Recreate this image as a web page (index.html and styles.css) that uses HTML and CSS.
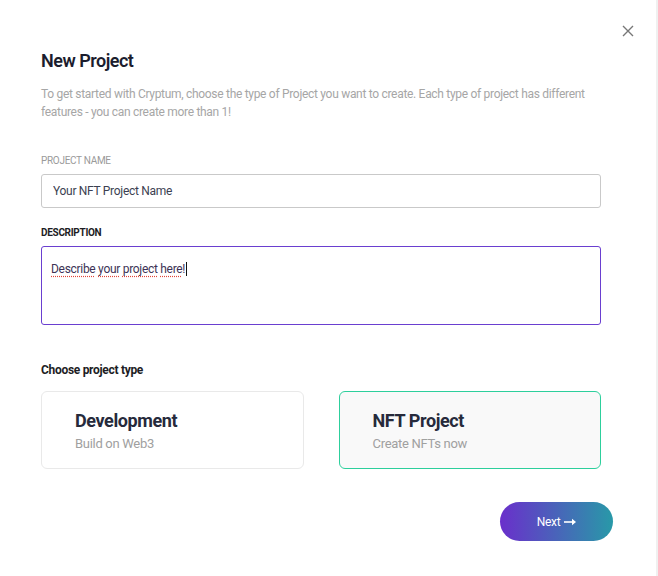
FILE: index.html
```html
<!DOCTYPE html>
<html>
<head>
    <title>New Project</title>
    <link rel="stylesheet" href="styles.css">
</head>
<body>
<div class="modal">
    <button class="close-btn" type="button" aria-label="Close">
        <svg width="12" height="12" viewBox="0 0 12 12">
            <path d="M1 1 L11 11 M11 1 L1 11" stroke="#777" stroke-width="1.4" fill="none"/>
        </svg>
    </button>

    <h2 class="modal-title">New Project</h2>
    <p class="modal-text">To get started with Cryptum, choose the type of Project you want to create. Each type of project has different features - you can create more than 1!</p>

    <div class="form-group">
        <label class="label" for="project-name">PROJECT NAME</label>
        <input class="input" type="text" id="project-name" value="Your NFT Project Name">
    </div>

    <div class="form-group">
        <label class="label label-active">DESCRIPTION</label>
        <div class="textarea"><span class="typo">Describe</span> <span class="typo">your</span> <span class="typo">project</span> <span class="typo">here</span>!<span class="caret"></span></div>
    </div>

    <h3 class="section-title">Choose project type</h3>
    <div class="type-grid">
        <div class="type-card">
            <div class="type-name">Development</div>
            <div class="type-sub">Build on Web3</div>
        </div>
        <div class="type-card selected">
            <div class="type-name">NFT Project</div>
            <div class="type-sub">Create NFTs now</div>
        </div>
    </div>

    <div class="actions">
        <button class="next-btn" type="button">Next
            <svg class="arrow" width="12" height="8" viewBox="0 0 12 8">
                <path d="M0 4 H9" stroke="#fff" stroke-width="1.6"/>
                <path d="M8 0.8 L12 4 L8 7.2 Z" fill="#fff"/>
            </svg>
        </button>
    </div>
</div>
</body>
</html>
```

FILE: styles.css
```css
body {
    margin: 0;
    background-color: #fff;
    font-family: "Roboto", sans-serif;
    letter-spacing: -0.3px;
    color: #1b1d2e;
}

.modal {
    position: relative;
    width: 658px;
    min-height: 576px;
    box-sizing: border-box;
    padding: 49px 55px 0 41px;
    border-right: 2px solid #f0f0f0;
}

.close-btn {
    position: absolute;
    top: 25px;
    right: 22px;
    padding: 0;
    border: none;
    background: none;
    cursor: pointer;
    line-height: 0;
}

.modal-title {
    margin: 0;
    font-size: 18px;
    line-height: 24px;
    font-weight: 600;
    letter-spacing: -0.5px;
    color: #1b1d2e;
}

.modal-text {
    margin: 12px 0 0;
    font-size: 12px;
    line-height: 18px;
    color: #a6a6a6;
}

.form-group {
    margin-top: 33px;
}

.form-group + .form-group {
    margin-top: 18px;
}

.label {
    display: block;
    font-size: 10px;
    line-height: 14px;
    color: #9a9a9a;
    margin-bottom: 6px;
}

.label-active {
    color: #1d1d24;
    font-weight: bold;
}

.input {
    display: block;
    width: 100%;
    height: 34px;
    box-sizing: border-box;
    padding: 0 11px;
    border: 1px solid #c9c9c9;
    border-radius: 3px;
    font-family: inherit;
    font-size: 12px;
    letter-spacing: -0.3px;
    color: #3c3f52;
    background: #fff;
}

.textarea {
    height: 79px;
    box-sizing: border-box;
    padding: 14px 9px;
    border: 1px solid #6a3fd0;
    border-radius: 3px;
    font-size: 12px;
    line-height: 16px;
    color: #3d3356;
}

.typo {
    text-decoration: underline dotted #e0453a;
    text-underline-offset: 3px;
}

.caret {
    display: inline-block;
    width: 1px;
    height: 14px;
    margin-left: 1px;
    vertical-align: -3px;
    background: #111;
}

.section-title {
    margin: 37px 0 0;
    font-size: 12px;
    line-height: 16px;
    font-weight: bold;
    color: #1d1d24;
}

.type-grid {
    display: grid;
    grid-template-columns: 1fr 1fr;
    gap: 35px;
    margin-top: 13px;
}

.type-card {
    height: 78px;
    box-sizing: border-box;
    padding: 18px 33px;
    border: 1px solid #e9e9e9;
    border-radius: 6px;
    background: #fff;
}

.type-card.selected {
    border-color: #2dcf9c;
    background: #f9f9f9;
}

.type-name {
    font-size: 18px;
    line-height: 22px;
    font-weight: bold;
    letter-spacing: -0.4px;
    color: #262a3b;
}

.type-sub {
    margin-top: 3px;
    font-size: 13px;
    line-height: 18px;
    color: #a0a0a0;
}

.actions {
    display: flex;
    justify-content: flex-end;
    margin: 33px -12px 0 0;
}

.next-btn {
    display: flex;
    align-items: center;
    justify-content: center;
    gap: 4px;
    width: 113px;
    height: 39px;
    border: none;
    border-radius: 20px;
    background: linear-gradient(90deg, #6a2fcb, #2899a8);
    color: #fff;
    font-family: inherit;
    font-size: 12px;
    letter-spacing: -0.3px;
    cursor: pointer;
}
```
